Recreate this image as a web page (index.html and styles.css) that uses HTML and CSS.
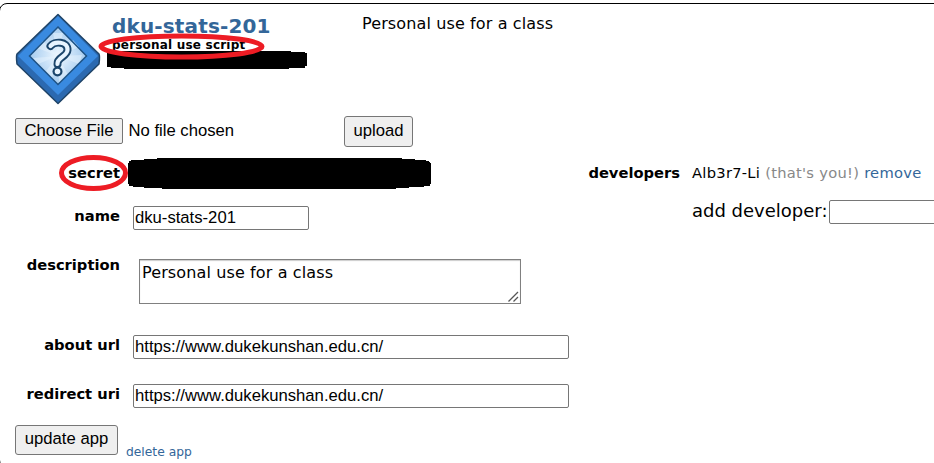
FILE: index.html
```html
<!DOCTYPE html>
<html lang="en">
<head>
<meta charset="utf-8">
<title>developed applications</title>
<link rel="stylesheet" href="styles.css">
</head>
<body>
<main class="app">
  <header class="app-header">
    <svg class="app-icon" width="86" height="92" viewBox="0 0 86 92">
      <defs>
        <radialGradient id="glow"><stop offset="0" stop-color="#f0f8ff"/><stop offset=".45" stop-color="#cce3f8"/><stop offset="1" stop-color="#a5cbee"/></radialGradient>
      </defs>
      <path d="M43 1.500 84 41Q85 43 84 51L43 90.500 2 51Q1 43 2 41Z" fill="#2b69b0" stroke="#1f4468" stroke-width="1.500" stroke-linejoin="round"/>
      <path d="M43 3 83 43 43 82 3 43Z" fill="#398ae0"/>
      <path d="M43 14 71.500 43 43 71.500 14.500 43Z" fill="url(#glow)"/>
      <path d="M43 43 38 20 48 20ZM43 43 58 27 64 34ZM43 43 67 42 64 51ZM43 43 53 62 44 70ZM43 43 31 58 37 65ZM43 43 18 45 23 51ZM43 43 22 35 28 28Z" fill="#e7f3fd" opacity=".5"/>
      <path d="M43 14 71.500 43 43 71.500 14.500 43Z" fill="none" stroke="#1d5285" stroke-width="1.500"/>
      <path d="M35.500 33C39 28 53 28 52.500 37 52 44 42 44 42.500 51" fill="none" stroke="#1b456b" stroke-width="8" stroke-linecap="round" stroke-linejoin="round"/>
      <circle cx="42.500" cy="58.500" r="5" fill="#1b456b"/>
      <path d="M35.500 33C39 28 53 28 52.500 37 52 44 42 44 42.500 51" fill="none" stroke="#e8f4ff" stroke-width="4.200" stroke-linecap="round" stroke-linejoin="round"/>
      <circle cx="42.500" cy="58.500" r="2.800" fill="#e8f4ff"/>
    </svg>
    <div class="app-details">
      <h2>dku-stats-201</h2>
      <div class="app-type">personal use script</div>
      <svg class="redaction" width="200" height="19" viewBox="0 0 200 19"><path d="M0 0H184V1H198V2H200V15H198V17H182V18H17V17H4V16H0Z"/></svg>
      <svg class="ring ring-type" width="168" height="28" viewBox="0 0 168 28"><ellipse cx="83.500" cy="13.500" rx="80.500" ry="10.500"/></svg>
    </div>
    <p class="app-description">Personal use for a class</p>
  </header>

  <div class="upload-row">
    <button class="choose" type="button">Choose File</button>
    <span class="file-name">No file chosen</span>
    <button class="upload" type="button">upload</button>
  </div>

  <div class="columns">
    <form class="preferences">
      <div class="row row-secret">
        <span class="label">secret</span>
        <svg class="redaction-secret" width="304" height="31" viewBox="0 0 304 31"><path d="M29 0H274V1H287V2H298V3H301V4H302V5H303V26H302V28H296V29H281V30H268V31H34V30H16V29H5V28H1V26H0V5H1V3H3V2H16V1H29Z"/></svg>
        <svg class="ring ring-secret" width="70" height="38" viewBox="0 0 70 38"><ellipse cx="34.500" cy="19" rx="32" ry="15.500"/></svg>
      </div>
      <div class="row row-name">
        <label class="label" for="name">name</label>
        <input class="short" id="name" value="dku-stats-201">
      </div>
      <div class="row row-description">
        <label class="label" for="description">description</label>
        <div class="area">
          <textarea id="description">Personal use for a class</textarea>
          <svg class="grip" width="11" height="11" viewBox="0 0 11 11"><path d="M.5 10.500 10 1M5.500 10.500 10 6"/></svg>
        </div>
      </div>
      <div class="row row-url">
        <label class="label" for="about">about url</label>
        <input class="long" id="about" value="https://www.dukekunshan.edu.cn/">
      </div>
      <div class="row row-uri">
        <label class="label" for="redirect">redirect uri</label>
        <input class="long" id="redirect" value="https://www.dukekunshan.edu.cn/">
      </div>
    </form>
    <section class="developers">
      <span class="label dev-label">developers</span>
      <div class="dev-list">
        <div class="dev"><span class="dev-name">Alb3r7-Li</span> <span class="you">(that's you!)</span> <a href="#">remove</a></div>
        <div class="add-dev"><label for="dev">add developer:</label><input id="dev"></div>
      </div>
    </section>
  </div>

  <footer class="actions">
    <button class="update" type="button">update app</button>
    <a class="delete" href="#">delete app</a>
  </footer>
</main>
</body>
</html>
```
FILE: styles.css
```css
* { box-sizing: border-box; }
html { background: #fff; overflow: hidden; }
body {
  margin: 0;
  height: 463px;
  overflow: hidden;
  font-family: Verdana, "DejaVu Sans", sans-serif;
  font-size: 16px;
  color: #000;
}
a { color: #369; text-decoration: none; }
h2, p { margin: 0; }
.app {
  width: 950px;
  height: 465px;
  margin: 3px 0 0 -1px;
  border: 1px solid #000;
  border-radius: 8px;
  background: #fff;
}
.app-header { display: flex; height: 112px; padding: 9px 0 0 15px; }
.app-icon { flex: none; }
.app-details { position: relative; width: 250px; margin-left: 6px; }
h2 {
  margin: 1px 0 0 5px;
  height: 25px;
  font-size: 20px;
  letter-spacing: 0.15px;
  line-height: 24px;
  color: #369;
  white-space: nowrap;
}
.app-type {
  margin-left: 5px;
  height: 12px;
  font-size: 12px;
  font-weight: bold;
  letter-spacing: 0.2px;
  line-height: 13px;
  white-space: nowrap;
}
.redaction { display: block; }
.ring { position: absolute; fill: none; stroke: #ed1c24; stroke-width: 5; }
.ring-type { left: -9px; top: 20px; }
.ring-secret { left: 59px; top: -4px; }
.app-description { padding: 1px 0 0 5px; letter-spacing: 0.12px; line-height: 20px; white-space: nowrap; }

button {
  padding: 0 0 2px;
  border: 1px solid #767676;
  border-radius: 3px;
  background: #efefef;
  font: 16.67px "Liberation Sans", sans-serif;
  color: #000;
}
.upload-row {
  display: flex;
  height: 42px;
  padding-left: 15px;
  font: 16.67px/26px "Liberation Sans", sans-serif;
}
.choose { width: 108px; height: 26px; margin-top: 2px; padding-bottom: 1px; border-radius: 2px; }
.file-name { width: 221px; padding: 2px 0 0 5.5px; }
.upload { width: 69px; height: 31px; }

.columns { display: flex; height: 263px; }
.preferences { width: 586px; flex: none; }
.row { position: relative; display: flex; align-items: flex-start; }
.label {
  width: 120px;
  font-size: 14.7px;
  font-weight: bold;
  line-height: 18px;
  text-align: right;
  white-space: nowrap;
}
.row-secret { height: 48px; }
.row-secret .label { padding-top: 6px; }
.redaction-secret { margin-left: 8px; }
.row-name { height: 53px; }
.row-name .label, .row-url .label, .row-uri .label { padding-top: 1px; }
.row-description { height: 76px; }
.row-description .label { margin-top: -3px; }
.row-url { height: 49px; }
input {
  height: 24px;
  margin: 0 0 0 13px;
  padding: 0 1px;
  border: 1px solid #767676;
  border-radius: 2px;
  background: #fff;
  font: 16.67px "Liberation Sans", sans-serif;
  color: #000;
}
.short { width: 176px; }
.long { width: 436px; }
.area { position: relative; width: 382px; height: 45px; margin-left: 19px; }
textarea {
  display: block;
  width: 382px;
  height: 45px;
  margin: 0;
  padding: 3px 2px;
  border: 1px solid #808080;
  box-shadow: inset 0 1px 1px #ccc;
  font: 16px/20px Verdana, "DejaVu Sans", sans-serif;
  letter-spacing: 0.12px;
  color: #000;
  overflow: hidden;
  resize: none;
}
.grip { position: absolute; right: 2px; bottom: 2px; fill: none; stroke: #555; stroke-width: 1.3; }
.developers { display: flex; flex: none; padding-top: 6px; }
.dev-label { width: 94px; }
.dev-list { margin-left: 12px; white-space: nowrap; }
.dev { height: 36px; font-size: 14.7px; letter-spacing: 0.27px; line-height: 18px; }
.you { color: #888; }
.add-dev { display: flex; font-size: 18px; line-height: 22px; }
.add-dev input { width: 160px; margin-left: 1px; }
.actions { display: flex; height: 42px; padding: 4px 0 0 15px; }
.update { width: 103px; height: 30px; }
.delete { padding: 18px 0 0 8px; font-size: 12.3px; line-height: 18px; }
```
